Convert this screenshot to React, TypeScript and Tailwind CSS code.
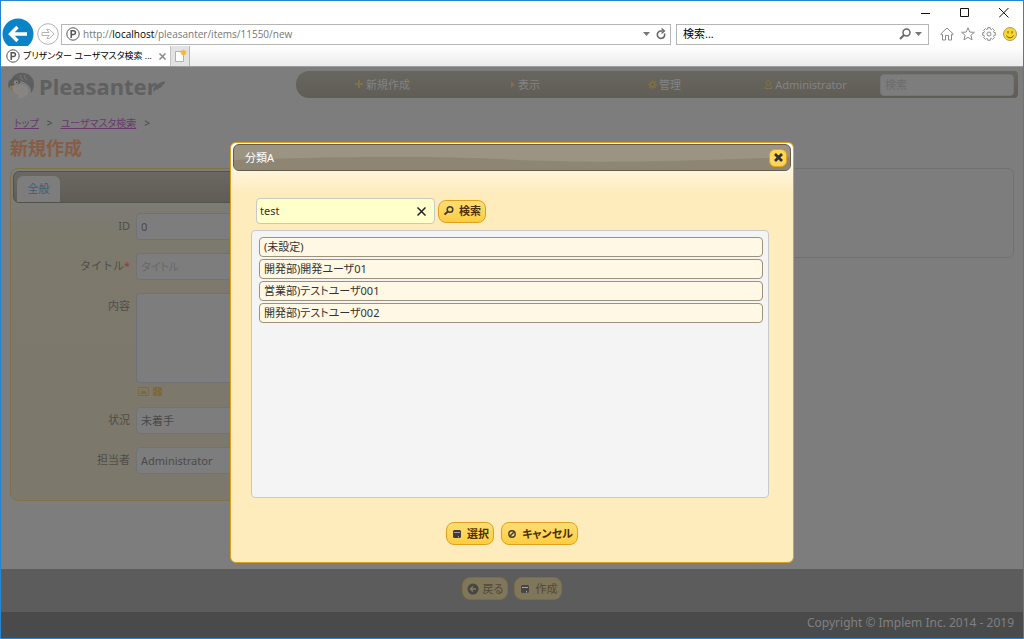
import React from "react";

function BackIcon() {
  return (
    <svg width="32" height="32" viewBox="0 0 32 32">
      <circle cx="16" cy="16" r="15.5" fill="#0a84c6" />
      <path d="M25 16H9M15.5 9L8.5 16l7 7" fill="none" stroke="#fff" strokeWidth="3.4" />
    </svg>
  );
}

function ForwardIcon() {
  return (
    <svg width="22" height="22" viewBox="0 0 22 22" fill="none" stroke="#b4b4b4">
      <circle cx="11" cy="11" r="10.3" />
      <path d="M5 9.5h7L9.8 6.5h2.6L17 11l-4.6 4.5H9.8l2.2-3H5z" />
    </svg>
  );
}

function SiteIcon() {
  return (
    <svg width="14" height="14" viewBox="0 0 14 14" fill="none" stroke="#555" className="shrink-0">
      <circle cx="7" cy="7" r="6.2" />
      <path d="M5.2 11V3.7h2.3a1.9 1.9 0 0 1 0 3.9H5.2" strokeWidth="1.5" />
    </svg>
  );
}

function Caret() {
  return (
    <svg width="7" height="4" viewBox="0 0 7 4">
      <path d="M0 0h7L3.5 4z" fill="#777" />
    </svg>
  );
}

function Penguin() {
  return (
    <svg width="27" height="28" viewBox="0 0 27 28" className="shrink-0">
      <path d="M4 6C7 1 12 0 16 1c6 1 10 5 10 11 0 4-1 7-3 9 0-5-2-8-6-10l-6-3-7 1z" fill="#5f5f5f" />
      <path d="M1 9c2-3 6-4 9-3l3 4-4 4-6 0-2 3c-1-3-1-6 0-8z" fill="#5b5b5b" />
      <path d="M4 14c2-1 5-2 8-2 6 0 9 4 8 9-1 4-6 6-11 5l2-3c-4 0-7-4-7-9z" fill="#878481" />
      <path d="M2 13.5l3 2-1 4-3-3z" fill="#887847" />
      <circle cx="8" cy="10.5" r="2.2" fill="#888" />
      <circle cx="8.5" cy="10.5" r=".8" fill="#444" />
      <path d="M13 3c-1 2 0 4 2 5M17 3c-1 2 0 4 2 5" fill="none" stroke="#787878" />
    </svg>
  );
}

type IconName = "search" | "disk" | "cancel" | "back";

function ButtonIcon({ name, color }: { name: IconName; color: string }) {
  return (
    <svg width="12" height="12" viewBox="0 0 12 12" fill="none" stroke={color} className="shrink-0">
      {name === "search" && (
        <>
          <circle cx="7" cy="4.5" r="2.8" strokeWidth="1.5" />
          <path d="M5 6.5L1.5 9.5" strokeWidth="2" />
        </>
      )}
      {name === "disk" && (
        <>
          <path d="M3 2h6l1 1v6l-1 1H3L2 9V3z" fill={color} stroke="none" />
          <path d="M3 4.5h6" stroke="#fff" strokeOpacity="0.5" />
          <path d="M7.5 8v1.5" stroke="#fff" strokeOpacity="0.5" />
        </>
      )}
      {name === "cancel" && (
        <>
          <circle cx="6" cy="6" r="3.2" strokeWidth="1.4" />
          <path d="M4 8l4-4" strokeWidth="1.4" />
        </>
      )}
      {name === "back" && (
        <>
          <circle cx="6" cy="6" r="5.5" fill={color} stroke="none" />
          <path d="M9 6H3.5M6 3.5L3.5 6 6 8.5" stroke="#83785a" strokeWidth="1.5" />
        </>
      )}
    </svg>
  );
}

function Button({ icon, label }: { icon: IconName; label: string }) {
  return (
    <button
      type="button"
      className="flex h-[23px] items-center gap-1 rounded-lg border border-[#dfa11a] bg-gradient-to-b from-[#ffdd74] to-[#fecd3e] px-1 text-[11px] leading-4 font-bold text-[#4c3000]"
    >
      <ButtonIcon name={icon} color="#3d3d3d" />
      {label}
    </button>
  );
}

function MutedButton({ icon, label }: { icon: IconName; label: string }) {
  return (
    <button
      type="button"
      className="flex h-[23px] items-center gap-1 rounded-lg border border-[#7b6c48] bg-[#80765a] px-1 text-[11px] leading-4 text-[#50493a]"
    >
      <ButtonIcon name={icon} color="#464646" />
      {label}
    </button>
  );
}

function BrowserBar() {
  return (
    <header className="font-['Open_Sans','Noto_Sans_CJK_JP',sans-serif] text-[11px] text-[#222] [font-feature-settings:'palt']">
      <div className="flex h-[21px] items-end justify-end gap-[29px] pr-[14px]">
        <button type="button" aria-label="最小化" className="pb-1">
          <svg width="10" height="10" viewBox="0 0 10 10"><path d="M0 5.5h9" stroke="#111" /></svg>
        </button>
        <button type="button" aria-label="最大化" className="pb-1">
          <svg width="10" height="10" viewBox="0 0 10 10"><path d="M.5.5h8v8h-8z" fill="none" stroke="#111" /></svg>
        </button>
        <button type="button" aria-label="閉じる" className="pb-1">
          <svg width="10" height="10" viewBox="0 0 10 10"><path d="M0 0l9.5 9.5M9.5 0L0 9.5" stroke="#111" /></svg>
        </button>
      </div>
      <div className="flex h-6 items-center pr-1.5 pl-px">
        <button type="button" aria-label="戻る"><BackIcon /></button>
        <button type="button" aria-label="進む" className="ml-[3px]"><ForwardIcon /></button>
        <div className="ml-[2px] flex h-[21px] flex-1 items-center border border-[#b5b5b5] px-1">
          <SiteIcon />
          <span className="ml-[3px] flex-1 text-[10px] leading-4 text-[#777]">
            http://<span className="text-black">localhost</span>/pleasanter/items/11550/new
          </span>
          <Caret />
          <button type="button" aria-label="更新" className="ml-1.5">
            <svg width="10" height="12" viewBox="0 0 10 12" fill="none" stroke="#666" strokeWidth="1.6">
              <path d="M8.5 5.5A3.7 3.7 0 1 1 5 3h2.5" />
              <path d="M5.5.5L8.5 3 5.500 5.500" strokeWidth="1.2" />
            </svg>
          </button>
        </div>
        <div className="ml-[5px] flex h-[21px] w-[253px] items-center border border-[#b5b5b5] px-1.5">
          <input aria-label="ウェブ検索" placeholder="検索..." className="min-w-0 flex-1 outline-none placeholder:text-black" />
          <svg width="12" height="12" viewBox="0 0 12 12" fill="none" stroke="#666" strokeWidth="1.5">
            <circle cx="7.5" cy="4.5" r="3.5" />
            <path d="M5 7L1 11" strokeWidth="2" />
          </svg>
          <span className="ml-1"><Caret /></span>
        </div>
        <div className="ml-[11px] flex items-center gap-[7px]">
          <svg width="14" height="14" viewBox="0 0 14 14" fill="none" stroke="#8b8b8b">
            <path d="M.7 7L7 1l6.3 6-1 1-.8-.7V13H8.500V8.500h-3V13h-3V7.300l-.8.7z" />
          </svg>
          <svg width="14" height="14" viewBox="0 0 14 14" fill="none" stroke="#8b8b8b">
            <path d="M7 .8l1.800 4.300 4.600.2-3.500 3 1.200 4.500L7 10.300l-4.100 2.500 1.200-4.500-3.500-3 4.600-.2z" />
          </svg>
          <svg width="14" height="14" viewBox="0 0 14 14" fill="none" stroke="#8b8b8b">
            <path d="M5.700 2V.7h2.600V2l1.200.5 1-1 1.900 1.900-.9 1 .5 1.200h1.300v2.700H12l-.5 1.200.9 1-1.900 1.900-1-1-1.200.5v1.400H5.700v-1.400l-1.200-.5-1 1-1.900-1.900.9-1L2 8.300H.7V5.600H2l.5-1.200-.9-1 1.900-1.900 1 1z" />
            <circle cx="7" cy="7" r="2" />
          </svg>
          <svg width="14" height="14" viewBox="0 0 14 14">
            <circle cx="7" cy="7" r="6.5" fill="#fbd62e" stroke="#a99a70" />
            <path d="M5 4v2.500M9 4v2.500M3.500 8.500c1.500 3 5.500 3 7 0" fill="none" stroke="#665a20" />
          </svg>
        </div>
      </div>
      <div className="flex h-[21px] border-b border-[#9b9b9b] bg-gradient-to-b from-white to-[#ebebeb]">
        <div className="flex w-[170px] items-center border-r border-[#c4c4c4] bg-white pr-1 pl-[5px]">
          <SiteIcon />
          <span className="ml-[3px] flex-1 text-[9px] leading-4 whitespace-nowrap text-black">プリザンター ユーザマスタ検索 ...</span>
          <button type="button" aria-label="タブを閉じる">
            <svg width="7" height="7" viewBox="0 0 7 7"><path d="M.5.5l6 6M6.5.5l-6 6" stroke="#888" strokeWidth="1.5" /></svg>
          </button>
        </div>
        <button type="button" aria-label="新しいタブ" className="flex w-[19px] items-center justify-center border-r border-[#b5b5b5] bg-[#e3e3e3]">
          <svg width="13" height="14" viewBox="0 0 13 14">
            <path d="M1.5 2.5h8v10h-8z" fill="#fff" stroke="#b0b0b0" />
            <path d="M9.5.5v6M6.5 3.5h6M7.5 1.5l4 4M11.500 1.500l-4 4" stroke="#f6b73c" strokeWidth="1.3" />
          </svg>
        </button>
      </div>
    </header>
  );
}

const menus = [
  { label: "新規作成", icon: <path d="M4 0v8M0 4h8" strokeWidth="2" /> },
  { label: "表示", icon: <path d="M4 1v7l4-3.5z" fill="#7f7048" stroke="none" /> },
  {
    label: "管理",
    icon: (
      <>
        <circle cx="4.5" cy="4.5" r="2.3" strokeWidth="1.6" />
        <path d="M4.500 0v1.500M4.500 7.500V9M0 4.500h1.500M7.500 4.500H9M1.300 1.300l1 1M6.700 6.700l1 1M7.700 1.300l-1 1M2.300 6.700l-1 1" strokeWidth="1.3" />
      </>
    ),
  },
  { label: "Administrator", icon: <path d="M4.500.8a2 2 0 0 1 0 4.400 2 2 0 0 1 0-4.400M3 5.500L1 7v1.500h7V7L6 5.500" /> },
];

function Navigation() {
  return (
    <div className="flex items-start pt-1 pr-[5px] pl-[7px]">
      <a href="#" className="mt-px flex h-7 w-[288px] items-center text-[22px] leading-7 font-bold text-[#606060]">
        <Penguin />
        <span className="ml-1">Pleasanter</span>
        <svg width="12" height="11" viewBox="0 0 12 11" className="-ml-1">
          <path d="M0 9C1 5 5 2 12 0c0 3-2 4-3 4 1 1-1 3-3 3 0 1-2 2-4 2L1 11z" fill="#606060" />
        </svg>
      </a>
      <nav className="flex h-[27px] flex-1 items-center rounded-l-[13px] rounded-r-sm bg-gradient-to-b from-[#686660] to-[#605d56] pr-1 pl-4">
        <ul className="grid flex-1 grid-cols-4">
          {menus.map((menu) => (
            <li key={menu.label}>
              <a href="#" className="flex items-center justify-center gap-0.5 text-[11px] leading-4 text-[#838383]">
                <svg width="9" height="9" viewBox="0 0 9 9" fill="none" stroke="#7f7048">{menu.icon}</svg>
                {menu.label}
              </a>
            </li>
          ))}
        </ul>
        <input
          aria-label="検索"
          placeholder="検索"
          className="ml-1 h-[22px] w-[134px] rounded border border-[#757575] bg-[#7d7d7d] px-1 text-[11px] placeholder:text-[#6c6c6c]"
        />
      </nav>
    </div>
  );
}

const inputClass = "w-full rounded border border-[#717277] bg-[#7d7d7d] px-1 text-[11px] leading-4 text-[#4a4a4a] placeholder:text-[#686868]";
const labelClass = "w-[123px] shrink-0 pt-[5px] pr-1.5 text-right text-[11px] leading-4 text-[#4e4e4a] [font-feature-settings:normal]";

function EditForm() {
  return (
    <form className="flex-1 rounded-lg border border-[#81704c] bg-gradient-to-b from-[#7d7d7d] via-[#7c796d] via-20% to-[#7c786b] p-0.5">
      <div className="flex h-8 items-end rounded-md border border-[#54524c] bg-gradient-to-b from-[#6b6861] to-[#605d57] pl-[3px]">
        <button type="button" className="h-[26px] w-[43px] rounded-t-md bg-[#7d7d7d] text-[11px] leading-4 text-[#3c6078]">
          全般
        </button>
      </div>
      <div className="flex flex-col gap-[13px] pt-[10px] pr-2 pb-6">
        <div className="flex">
          <label htmlFor="item-id" className={labelClass}>ID</label>
          <input id="item-id" defaultValue="0" className={`${inputClass} h-[27px]`} />
        </div>
        <div className="flex">
          <label htmlFor="item-title" className={labelClass}>
            タイトル<span className="text-[#8a4040]">*</span>
          </label>
          <input id="item-title" placeholder="タイトル" className={`${inputClass} h-[27px]`} />
        </div>
        <div className="flex">
          <label htmlFor="item-body" className={labelClass}>内容</label>
          <div className="flex-1">
            <textarea id="item-body" className={`${inputClass} block h-[90px] resize-none`} />
            <div className="mt-[3px] flex h-[10px] items-center gap-1 pl-0.5">
              <svg width="11" height="9" viewBox="0 0 11 9" fill="none" stroke="#7f693b">
                <rect x=".5" y=".5" width="10" height="8" rx="1" />
                <path d="M2.500 6.500l2-3 1.500 1.500 1-1 1.500 2.500z" fill="#7f693b" />
              </svg>
              <svg width="9" height="9" viewBox="0 0 9 9">
                <rect width="9" height="9" rx="1.5" fill="#7f693b" />
                <path d="M4.500 1.500v2M4.500 5.500v2M1 4.500h1M7 4.500h1" stroke="#7d776a" strokeWidth="1.5" />
              </svg>
            </div>
          </div>
        </div>
        <div className="-mt-0.5 flex">
          <label htmlFor="item-status" className={labelClass}>状況</label>
          <select id="item-status" className={`${inputClass} h-[27px] appearance-none`}>
            <option>未着手</option>
          </select>
        </div>
        <div className="flex">
          <label htmlFor="item-owner" className={labelClass}>担当者</label>
          <select id="item-owner" className={`${inputClass} h-[27px] appearance-none`}>
            <option>Administrator</option>
          </select>
        </div>
      </div>
    </form>
  );
}

const users = ["(未設定)", "開発部)開発ユーザ01", "営業部)テストユーザ001", "開発部)テストユーザ002"];

function SelectDialog() {
  return (
    <div className="absolute inset-0 flex items-center justify-center">
      <section
        role="dialog"
        aria-labelledby="dialog-title"
        className="w-[564px] rounded-md border border-[#dba01c] bg-gradient-to-b from-white via-[#feecbd] via-12% to-[#feecbd] px-0.5 pt-px pb-[3px]"
      >
        <div className="relative flex h-[27px] items-center justify-between overflow-hidden rounded-md border border-[#655c4b] bg-[#9c9483] pr-[3px] pl-[11px]">
          <svg className="absolute inset-0 h-full w-full" viewBox="0 0 558 25" preserveAspectRatio="none">
            <path d="M0 15C60 13 160 10 240 13S370 20 558 12V25H0z" fill="#8e8572" />
          </svg>
          <h2 id="dialog-title" className="relative text-[11px] leading-4 text-white">分類A</h2>
          <button type="button" aria-label="閉じる" className="relative flex size-[18px] items-center justify-center rounded-md border border-[#e3a21a] bg-[#ffd55a]">
            <svg width="9" height="9" viewBox="0 0 9 9"><path d="M1 1l7 7M8 1L1 8" stroke="#333" strokeWidth="2.8" /></svg>
          </button>
        </div>
        <div className="pt-[27px] pr-[22px] pb-[14px] pl-[18px]">
          <div className="flex items-center gap-[3px] pl-[5px]">
            <div className="flex h-[26px] w-[179px] items-center rounded border border-[#c8c8c8] bg-[#ffffcc] pr-2 pl-[3px]">
              <input aria-label="検索語" defaultValue="test" className="min-w-0 flex-1 text-[11px] leading-4 text-[#333] outline-none" />
              <button type="button" aria-label="クリア">
                <svg width="9" height="9" viewBox="0 0 9 9"><path d="M.5.5l8 8M8.5.5l-8 8" stroke="#222" strokeWidth="1.5" /></svg>
              </button>
            </div>
            <Button icon="search" label="検索" />
          </div>
          <ol className="mt-1.5 flex h-[268px] flex-col gap-0.5 rounded border border-[#c8c8c8] bg-[#f4f4f4] py-1.5 pr-[5px] pl-[7px]">
            {users.map((user) => (
              <li key={user} className="flex h-5 items-center rounded border border-[#9c917a] bg-[#fff8e5] px-1 text-[11px] leading-4 text-[#333]">
                {user}
              </li>
            ))}
          </ol>
          <div className="mt-6 flex justify-center gap-[7px] pl-1">
            <Button icon="disk" label="選択" />
            <Button icon="cancel" label="キャンセル" />
          </div>
        </div>
      </section>
    </div>
  );
}

export default function App() {
  return (
    <div className="flex min-h-screen flex-col border border-[#2a85d0] bg-white">
      <BrowserBar />
      <div className="relative flex flex-1 flex-col bg-[#7d7d7d] font-['Noto_Sans','Noto_Sans_CJK_JP',sans-serif] [font-feature-settings:'palt']">
        <Navigation />
        <div className="mt-[15px] flex items-center gap-2 px-[13px] text-[10px] leading-4 text-[#444]">
          <a href="#" className="text-[#673a6b] underline">トップ</a>
          <span>&gt;</span>
          <a href="#" className="text-[#673a6b] underline">ユーザマスタ検索</a>
          <span>&gt;</span>
        </div>
        <h1 className="mt-[5px] px-[9px] text-[18px] leading-6 font-bold text-[#865e45]">新規作成</h1>
        <main className="mt-2 flex flex-1 items-start gap-5 px-[9px]">
          <EditForm />
          <aside className="h-[90px] w-[380px] rounded-md border border-[#717171]" />
        </main>
        <div className="flex h-[43px] items-center justify-center gap-1.5 bg-[#5c5c5c] pb-1">
          <MutedButton icon="back" label="戻る" />
          <MutedButton icon="disk" label="作成" />
        </div>
        <footer className="h-[26px] bg-[#4a4a4a] px-[9px] py-[3px] text-right text-[12px] leading-4 text-[#808080]">
          Copyright © Implem Inc. 2014 - 2019
        </footer>
        <SelectDialog />
      </div>
    </div>
  );
}
